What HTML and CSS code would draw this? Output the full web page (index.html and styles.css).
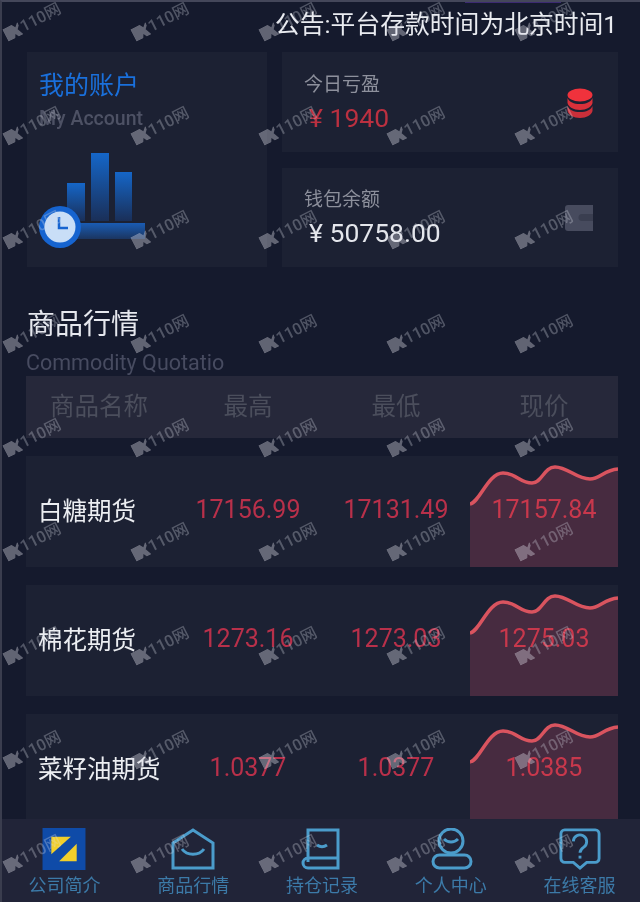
FILE: index.html
```html
<!DOCTYPE html>
<html lang="zh-CN">
<head>
    <meta charset="UTF-8">
    <meta name="viewport" content="width=device-width, initial-scale=1.0">
    <title>商品行情</title>
    <link rel="stylesheet" href="styles.css">
</head>
<body>
    <div class="app">
        <div class="main">
            <div class="notice"><span>公告:平台存款时间为北京时间1</span></div>

            <div class="account">
                <div class="card card-main">
                    <div class="card-title">我的账户</div>
                    <div class="card-sub">My Account</div>
                    <svg class="card-art" width="110" height="104" viewBox="0 0 110 104">
                        <defs>
                            <linearGradient id="barFill" x1="0" y1="0" x2="0" y2="1">
                                <stop offset="0" stop-color="#1566c8"/>
                                <stop offset="1" stop-color="#1a2f58"/>
                            </linearGradient>
                            <linearGradient id="baseFill" x1="0" y1="0" x2="0" y2="1">
                                <stop offset="0" stop-color="#1a5cb4"/>
                                <stop offset="1" stop-color="#1b3560"/>
                            </linearGradient>
                        </defs>
                        <rect x="30" y="32" width="18" height="38" fill="url(#barFill)"/>
                        <rect x="54" y="2" width="18" height="68" fill="url(#barFill)"/>
                        <rect x="78" y="21" width="17" height="49" fill="url(#barFill)"/>
                        <rect x="30" y="72" width="78" height="16" fill="url(#baseFill)"/>
                        <circle cx="23" cy="76" r="21" fill="#1664d0"/>
                        <circle cx="23" cy="76" r="15.500" fill="#c9def7"/>
                        <path d="M22 66v11h9" fill="none" stroke="#1664d0" stroke-width="2.500"/>
                    </svg>
                </div>
                <div class="card-col">
                    <div class="card card-stat">
                        <div>
                            <div class="stat-label">今日亏盈</div>
                            <div class="stat-value stat-red">¥ 1940</div>
                        </div>
                        <svg class="stat-icon" width="26" height="30" viewBox="0 0 26 30">
                            <ellipse cx="13" cy="7" rx="12.500" ry="6.500" fill="#f0323c"/>
                            <path d="M.5 10c2 4 6 6 12.500 6s10.500-2 12.500-6v5c-1 4-6 7-12.500 7S1.500 19 .5 15z" fill="#d9303a"/>
                            <path d="M.5 18c2 4 6 6 12.500 6s10.500-2 12.500-6v5c-1 4-6 7-12.500 7S1.500 27 .5 23z" fill="#c92f3a"/>
                        </svg>
                    </div>
                    <div class="card card-stat">
                        <div>
                            <div class="stat-label">钱包余额</div>
                            <div class="stat-value">¥ 50758.00</div>
                        </div>
                        <svg class="stat-icon" width="28" height="28" viewBox="0 0 28 28">
                            <path d="M3 1h25v26H3a3 3 0 0 1-3-3V4a3 3 0 0 1 3-3z" fill="#474b5e"/>
                            <path d="M28 10H17a3 3 0 0 0 0 7h11" fill="#3a3e50"/>
                        </svg>
                    </div>
                </div>
            </div>

            <h2 class="section-title">商品行情</h2>
            <div class="section-sub">Commodity Quotatio</div>

            <div class="quote-head">
                <div class="col-name">商品名称</div>
                <div>最高</div>
                <div>最低</div>
                <div>现价</div>
            </div>

            <div class="quote-row">
                <div class="col-name">白糖期货</div>
                <div>17156.99</div>
                <div>17131.49</div>
                <div class="col-now">
                    <svg class="spark" width="148" height="111" viewBox="0 0 148 111">
                        <path class="spark-fill" d="M0 48C10 46 18 17 33 17C46 17 50 27 62 27C72 27 74 11 85 11C98 11 106 23 120 23C130 23 134 14 148 13V111H0Z"/>
                        <path class="spark-line" d="M0 48C10 46 18 17 33 17C46 17 50 27 62 27C72 27 74 11 85 11C98 11 106 23 120 23C130 23 134 14 148 13"/>
                    </svg>
                    <span>17157.84</span>
                </div>
            </div>
            <div class="quote-row">
                <div class="col-name">棉花期货</div>
                <div>1273.16</div>
                <div>1273.03</div>
                <div class="col-now">
                    <svg class="spark" width="148" height="111" viewBox="0 0 148 111">
                        <path class="spark-fill" d="M0 48C10 46 18 17 33 17C46 17 50 27 62 27C72 27 74 11 85 11C98 11 106 23 120 23C130 23 134 14 148 13V111H0Z"/>
                        <path class="spark-line" d="M0 48C10 46 18 17 33 17C46 17 50 27 62 27C72 27 74 11 85 11C98 11 106 23 120 23C130 23 134 14 148 13"/>
                    </svg>
                    <span>1275.03</span>
                </div>
            </div>
            <div class="quote-row">
                <div class="col-name">菜籽油期货</div>
                <div>1.0377</div>
                <div>1.0377</div>
                <div class="col-now">
                    <svg class="spark" width="148" height="111" viewBox="0 0 148 111">
                        <path class="spark-fill" d="M0 48C10 46 18 17 33 17C46 17 50 27 62 27C72 27 74 11 85 11C98 11 106 23 120 23C130 23 134 14 148 13V111H0Z"/>
                        <path class="spark-line" d="M0 48C10 46 18 17 33 17C46 17 50 27 62 27C72 27 74 11 85 11C98 11 106 23 120 23C130 23 134 14 148 13"/>
                    </svg>
                    <span>1.0385</span>
                </div>
            </div>
        </div>

        <nav class="tabbar">
            <div class="tab">
                <svg width="44" height="43" viewBox="0 0 44 43">
                    <rect width="44" height="43" fill="#0f4ba8"/>
                    <path d="M9 9h20L9 27z" fill="#f2cf2a"/>
                    <path d="M35 16v18H17z" fill="#f2cf2a"/>
                </svg>
                <span>公司简介</span>
            </div>
            <div class="tab">
                <svg width="44" height="42" viewBox="0 0 44 42" class="tab-line">
                    <path d="M2 15L22 2l20 13v25H2z"/>
                    <path d="M11 21c5 7 17 7 22 0"/>
                </svg>
                <span>商品行情</span>
            </div>
            <div class="tab">
                <svg width="44" height="42" viewBox="0 0 44 42" class="tab-line">
                    <path d="M8 34V2h30v38H8a5 5 0 0 1 0-10h30"/>
                    <path d="M17 17c3 2 7 2 10 0"/>
                </svg>
                <span>持仓记录</span>
            </div>
            <div class="tab">
                <svg width="44" height="42" viewBox="0 0 44 42" class="tab-line">
                    <circle cx="22" cy="13" r="12"/>
                    <rect x="4" y="27" width="38" height="13" rx="6.500"/>
                    <path d="M15 11c4 4 10 4 14 0"/>
                </svg>
                <span>个人中心</span>
            </div>
            <div class="tab">
                <svg width="44" height="44" viewBox="0 0 44 44" class="tab-line">
                    <path d="M6 2h32a4 4 0 0 1 4 4v26a4 4 0 0 1-4 4h-9l-7 6-7-6H6a4 4 0 0 1-4-4V6a4 4 0 0 1 4-4z"/>
                    <path d="M15 14a7 7 0 1 1 11 6c-3 2-4 3-4 6"/>
                    <path d="M22 29v3"/>
                </svg>
                <span>在线客服</span>
            </div>
        </nav>

        <div class="top-glow"></div>

        <div class="marks">
            <span class="mark">110网</span><span class="mark">110网</span><span class="mark">110网</span><span class="mark">110网</span><span class="mark">110网</span>
            <span class="mark">110网</span><span class="mark">110网</span><span class="mark">110网</span><span class="mark">110网</span><span class="mark">110网</span>
            <span class="mark">110网</span><span class="mark">110网</span><span class="mark">110网</span><span class="mark">110网</span><span class="mark">110网</span>
            <span class="mark">110网</span><span class="mark">110网</span><span class="mark">110网</span><span class="mark">110网</span><span class="mark">110网</span>
            <span class="mark">110网</span><span class="mark">110网</span><span class="mark">110网</span><span class="mark">110网</span><span class="mark">110网</span>
            <span class="mark">110网</span><span class="mark">110网</span><span class="mark">110网</span><span class="mark">110网</span><span class="mark">110网</span>
            <span class="mark">110网</span><span class="mark">110网</span><span class="mark">110网</span><span class="mark">110网</span><span class="mark">110网</span>
            <span class="mark">110网</span><span class="mark">110网</span><span class="mark">110网</span><span class="mark">110网</span><span class="mark">110网</span>
            <span class="mark">110网</span><span class="mark">110网</span><span class="mark">110网</span><span class="mark">110网</span><span class="mark">110网</span>
        </div>
    </div>
</body>
</html>
```

FILE: styles.css
```css
* {
    box-sizing: border-box;
}
body {
    margin: 0;
    background-color: #151a2d;
    font-family: Roboto, "Noto Sans CJK SC", sans-serif;
}
.app {
    position: relative;
    width: 640px;
    height: 902px;
    display: flex;
    flex-direction: column;
    overflow: hidden;
    background-color: #151a2d;
    border-left: 2px solid #3a3d4e;
    border-top: 2px solid #44475a;
    filter: blur(0.4px);
}
.main {
    flex: 1;
    min-height: 0;
    overflow: hidden;
    padding: 0 22px 0 24px;
}
.notice {
    height: 50px;
    padding: 7px 0 0 249px;
    white-space: nowrap;
    font-size: 24.8px;
    line-height: 32px;
    color: #e9ebf0;
}
.account {
    display: flex;
    gap: 15px;
    height: 215px;
    margin-left: 1px;
}
.card {
    background-color: #1c2133;
}
.card-main {
    width: 240px;
    padding: 17px 12px 0;
}
.card-title {
    font-size: 25px;
    line-height: 34px;
    color: #1a70dc;
}
.card-sub {
    font-size: 19.500px;
    line-height: 32px;
    color: #4d5164;
    font-weight: 500;
    white-space: nowrap;
}
.card-art {
    display: block;
    margin: 16px 0 0 -2px;
}
.card-col {
    flex: 1;
    display: flex;
    flex-direction: column;
    gap: 16px;
}
.card-stat {
    flex: 1;
    display: flex;
    align-items: center;
    justify-content: space-between;
    padding: 2px 25px 0 22px;
}
.stat-label {
    font-size: 19px;
    line-height: 30px;
    color: #8d909c;
}
.stat-value {
    padding-left: 5px;
    font-size: 26.500px;
    line-height: 36px;
    color: #e4e6ec;
    white-space: pre;
}
.stat-red {
    color: #bb3040;
}
.stat-icon {
    display: block;
}
.section-title {
    margin: 38px 0 0 1px;
    font-size: 28px;
    line-height: 40px;
    font-weight: 400;
    color: #e6e8ee;
}
.section-sub {
    margin: 4px 0 0 0;
    font-size: 21.500px;
    line-height: 28px;
    color: #474b60;
    white-space: nowrap;
}
.quote-head,
.quote-row {
    display: grid;
    grid-template-columns: 148px 148px 148px 148px;
    align-items: center;
    text-align: center;
}
.quote-head {
    height: 62px;
    margin-top: -1px;
    padding-bottom: 6px;
    font-size: 24.500px;
    color: #4b4e5c;
    background-color: #26283a;
}
.quote-head .col-name {
    text-align: left;
    padding-left: 24px;
}
.quote-row {
    height: 111px;
    margin-top: 18px;
    font-size: 25px;
    color: #b8304a;
    background-color: #1c2133;
}
.quote-row > div {
    padding-bottom: 4px;
}
.quote-row .col-name {
    text-align: left;
    padding-left: 12px;
    font-size: 24.500px;
    color: #eceef2;
    white-space: nowrap;
}
.quote-row .col-now {
    position: relative;
    height: 111px;
    padding-bottom: 0;
    line-height: 107px;
    color: #c8384c;
}
.col-now span {
    position: relative;
}
.spark {
    position: absolute;
    left: 0;
    top: 0;
}
.spark-fill {
    fill: #472b40;
}
.spark-line {
    fill: none;
    stroke: #d9545f;
    stroke-width: 3.500;
}
.tabbar {
    flex: none;
    height: 83px;
    margin-left: -2px;
    display: grid;
    grid-template-columns: repeat(5, 128.800px);
    padding: 9px 0 0 0;
    background-color: #212438;
    position: relative;
}
.tab {
    display: flex;
    flex-direction: column;
    align-items: center;
    font-size: 18px;
    line-height: 24px;
    color: #3c7aa8;
}
.tab svg {
    display: block;
    height: 42px;
    margin-bottom: 4px;
}
.tab-line {
    fill: none;
    stroke: #4b9ccb;
    stroke-width: 3;
}
.top-glow {
    position: absolute;
    left: 463px;
    top: -2px;
    width: 96px;
    height: 3px;
    background-color: #3c2a72;
}
.marks {
    position: absolute;
    left: 0;
    top: 0;
    display: grid;
    grid-template-columns: repeat(5, 128px);
    grid-auto-rows: 104px;
    pointer-events: none;
}
.mark {
    display: flex;
    align-items: center;
    gap: 1px;
    width: 60px;
    height: 18px;
    margin: 11px 0 0 0;
    transform: rotate(-27deg);
    font-size: 16px;
    line-height: 18px;
    font-weight: 500;
    white-space: nowrap;
    color: rgba(220, 222, 232, 0.3);
}
.mark::before {
    content: "";
    flex: none;
    width: 17px;
    height: 14px;
    background-color: rgba(220, 222, 232, 0.38);
    clip-path: polygon(0 0, 60% 0, 75% 30%, 100% 0, 100% 25%, 82% 50%, 100% 100%, 70% 100%, 58% 72%, 45% 100%, 0 100%);
}
```
